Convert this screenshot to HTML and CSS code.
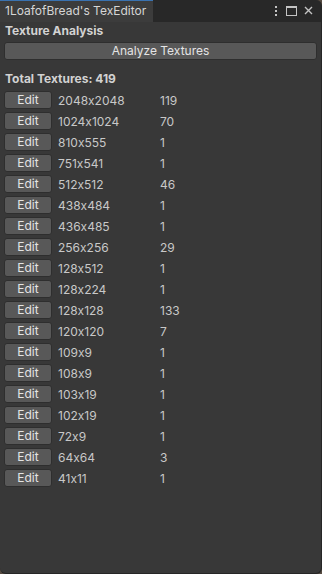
FILE: index.html
```html
<!DOCTYPE html>
<html>
<head>
<meta charset="utf-8">
<link rel="stylesheet" href="styles.css">
</head>
<body>
<div class="window">
  <div class="header">
    <div class="tab">1LoafofBread's TexEditor</div>
    <div class="header-fill"></div>
    <div class="controls">
      <svg class="icon" width="6" height="12" viewBox="0 0 6 12"><rect x="2" y="1" width="2" height="2" fill="#c4c4c4"/><rect x="2" y="5" width="2" height="2" fill="#c4c4c4"/><rect x="2" y="9" width="2" height="2" fill="#c4c4c4"/></svg>
      <svg class="icon" width="11" height="10" viewBox="0 0 11 10"><rect x="0.5" y="0.5" width="10" height="9" fill="none" stroke="#c4c4c4" stroke-width="1"/><rect x="0" y="0" width="11" height="2" fill="#c4c4c4"/></svg>
      <svg class="icon" width="9" height="9" viewBox="0 0 9 9"><path d="M1 1 L8 8 M8 1 L1 8" stroke="#c4c4c4" stroke-width="1.4"/></svg>
    </div>
  </div>
  <div class="content">
    <div class="title">Texture Analysis</div>
    <div class="btn wide">Analyze Textures</div>
    <div class="title total">Total Textures: 419</div>
    <div class="list">
      <div class="row"><div class="btn edit">Edit</div><span class="dim">2048x2048</span><span class="count">119</span></div>
      <div class="row"><div class="btn edit">Edit</div><span class="dim">1024x1024</span><span class="count">70</span></div>
      <div class="row"><div class="btn edit">Edit</div><span class="dim">810x555</span><span class="count">1</span></div>
      <div class="row"><div class="btn edit">Edit</div><span class="dim">751x541</span><span class="count">1</span></div>
      <div class="row"><div class="btn edit">Edit</div><span class="dim">512x512</span><span class="count">46</span></div>
      <div class="row"><div class="btn edit">Edit</div><span class="dim">438x484</span><span class="count">1</span></div>
      <div class="row"><div class="btn edit">Edit</div><span class="dim">436x485</span><span class="count">1</span></div>
      <div class="row"><div class="btn edit">Edit</div><span class="dim">256x256</span><span class="count">29</span></div>
      <div class="row"><div class="btn edit">Edit</div><span class="dim">128x512</span><span class="count">1</span></div>
      <div class="row"><div class="btn edit">Edit</div><span class="dim">128x224</span><span class="count">1</span></div>
      <div class="row"><div class="btn edit">Edit</div><span class="dim">128x128</span><span class="count">133</span></div>
      <div class="row"><div class="btn edit">Edit</div><span class="dim">120x120</span><span class="count">7</span></div>
      <div class="row"><div class="btn edit">Edit</div><span class="dim">109x9</span><span class="count">1</span></div>
      <div class="row"><div class="btn edit">Edit</div><span class="dim">108x9</span><span class="count">1</span></div>
      <div class="row"><div class="btn edit">Edit</div><span class="dim">103x19</span><span class="count">1</span></div>
      <div class="row"><div class="btn edit">Edit</div><span class="dim">102x19</span><span class="count">1</span></div>
      <div class="row"><div class="btn edit">Edit</div><span class="dim">72x9</span><span class="count">1</span></div>
      <div class="row"><div class="btn edit">Edit</div><span class="dim">64x64</span><span class="count">3</span></div>
      <div class="row"><div class="btn edit">Edit</div><span class="dim">41x11</span><span class="count">1</span></div>
    </div>
  </div>
</div>
</body>
</html>
```

FILE: styles.css
```css
html, body {
  margin: 0;
  padding: 0;
  background: #564b42;
}
body {
  width: 322px;
  height: 574px;
  font-family: Inter, "Noto Sans", sans-serif;
  font-size: 12px;
  font-feature-settings: "calt" 0;
  color: #d2d2d2;
}
.window {
  width: 322px;
  height: 574px;
  box-sizing: border-box;
  background: #383838;
  border-radius: 0 6px 6px 6px;
  border-right: 1px solid #262626;
  border-bottom: 1px solid #262626;
  overflow: hidden;
  display: flex;
  flex-direction: column;
}
.header {
  height: 22px;
  flex: none;
  display: flex;
  background: #282828;
}
.tab {
  width: 153px;
  padding-left: 5px;
  background: #3c3c3c;
  border-top: 1px solid #3a72b0;
  box-sizing: border-box;
  line-height: 20px;
  white-space: nowrap;
  overflow: hidden;
  color: #d6d6d6;
  font-size: 12px;
}
.header-fill {
  flex: 1;
}
.controls {
  display: flex;
  align-items: center;
  gap: 7px;
  padding-right: 8px;
  padding-bottom: 1px;
}
.icon {
  display: block;
}
.content {
  padding: 0 4px;
}
.title {
  font-weight: bold;
  line-height: 18px;
  padding-left: 1px;
  color: #d2d2d2;
}
.btn {
  box-sizing: border-box;
  height: 18px;
  background: #585858;
  border: 1px solid #2e2e2e;
  border-radius: 3px;
  color: #e4e4e4;
  text-align: center;
  line-height: 16px;
}
.wide {
  margin-top: 2px;
}
.total {
  margin-top: 10px;
}
.list {
  margin-top: 3px;
  display: flex;
  flex-direction: column;
  gap: 3px;
}
.row {
  display: flex;
  align-items: center;
  height: 18px;
}
.edit {
  width: 48px;
  flex: none;
}
.dim {
  width: 102px;
  margin-left: 6px;
  color: #c8c8c8;
}
.count {
  color: #c8c8c8;
}
```
